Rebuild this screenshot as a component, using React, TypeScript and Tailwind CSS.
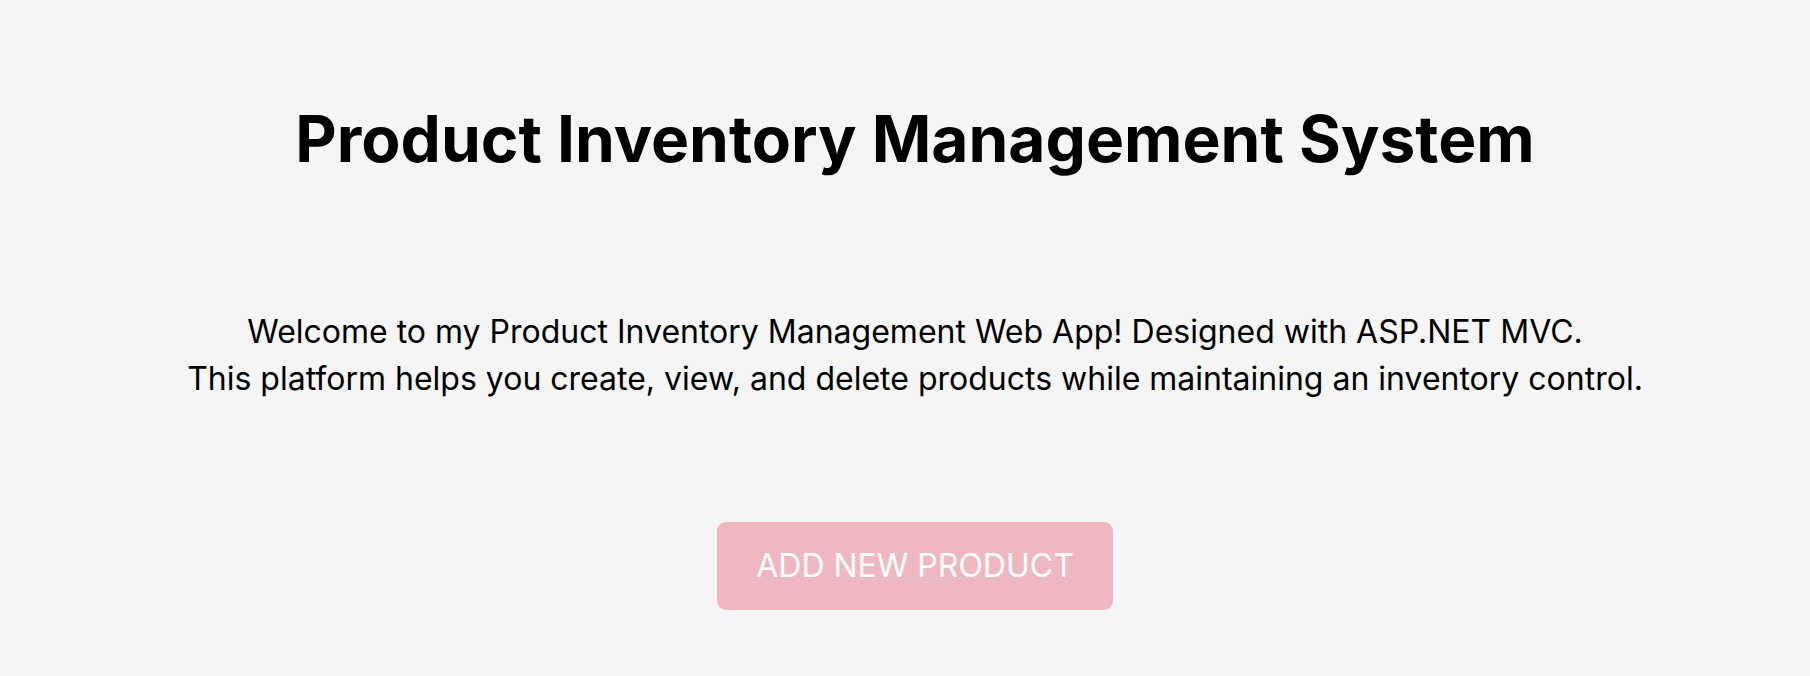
import React from "react";

export default function App() {
  return (
    <div className="min-h-[676px] w-full bg-[#f5f5f5] flex flex-col items-center text-black pl-[20px]" style={{ fontFamily: "Inter, 'Noto Sans', sans-serif" }}>
      <h1 className="pt-[100px] text-[64px] leading-[77px] font-bold text-center">
        Product Inventory Management System
      </h1>
      <p className="mt-[131px] text-[32px] leading-[47px] font-normal text-center">
        Welcome to my Product Inventory Management Web App! Designed with ASP.NET MVC.
        <br />
        This platform helps you create, view, and delete products while maintaining an inventory control.
      </p>
      <button className="mt-[120px] w-[396px] h-[88px] rounded-[9px] bg-[#efb8c1] text-white text-[32px] font-normal flex items-center justify-center">
        ADD NEW PRODUCT
      </button>
    </div>
  );
}
